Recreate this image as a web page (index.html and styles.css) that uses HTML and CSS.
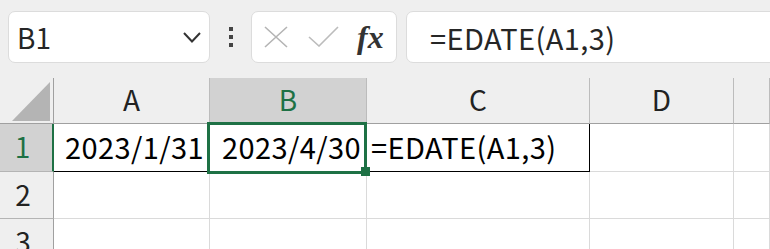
FILE: index.html
```html
<!DOCTYPE html>
<html lang="ja">
<head>
    <meta charset="UTF-8">
    <title>EDATE</title>
    <link rel="stylesheet" href="styles.css">
</head>
<body>
<div class="toolbar">
    <div class="namebox">
        <span class="ref">B1</span>
        <svg class="chevron" width="18" height="11" viewBox="0 0 18 11"><path d="M1 1 L9 9.5 L17 1" fill="none" stroke="#333" stroke-width="2"/></svg>
    </div>
    <div class="grip"><span></span><span></span><span></span></div>
    <div class="fxbox">
        <svg class="cancel" width="24" height="22" viewBox="0 0 24 22"><path d="M1 1 L23 21 M23 1 L1 21" fill="none" stroke="#b4b4b4" stroke-width="1.6"/></svg>
        <svg class="enter" width="31" height="21" viewBox="0 0 31 21"><path d="M1 11 L11 20 L30 1" fill="none" stroke="#bcbcbc" stroke-width="1.6"/></svg>
        <span class="fx">fx</span>
    </div>
    <div class="formula">=EDATE(A1,3)</div>
</div>

<div class="sheet">
    <div class="corner">
        <svg width="53" height="45" viewBox="0 0 53 45"><polygon points="12,43 50,43 50,4" fill="#b4b4b4"/></svg>
    </div>
    <div class="colhead">A</div>
    <div class="colhead sel">B</div>
    <div class="colhead">C</div>
    <div class="colhead">D</div>
    <div class="colhead"></div>

    <div class="rowhead sel">1</div>
    <div class="cell num boxed">2023/1/31</div>
    <div class="cell num boxed active">2023/4/30</div>
    <div class="cell boxed last">=EDATE(A1,3)</div>
    <div class="cell"></div>
    <div class="cell"></div>

    <div class="rowhead">2</div>
    <div class="cell"></div>
    <div class="cell"></div>
    <div class="cell"></div>
    <div class="cell"></div>
    <div class="cell"></div>

    <div class="rowhead">3</div>
    <div class="cell"></div>
    <div class="cell"></div>
    <div class="cell"></div>
    <div class="cell"></div>
    <div class="cell"></div>
</div>
</body>
</html>
```

FILE: styles.css
```css
body {
    margin: 0;
    overflow: hidden;
    background: #fff;
    font-family: "Noto Sans CJK JP", "Noto Sans", sans-serif;
    color: #000;
}

/* formula bar */
.toolbar {
    display: flex;
    align-items: center;
    height: 78px;
    padding: 0 0 4px 8px;
    box-sizing: border-box;
    background: #efefef;
}
.namebox, .fxbox, .formula {
    height: 52px;
    box-sizing: border-box;
    background: #fff;
    border: 1px solid #dcdcdc;
    border-radius: 7px;
    display: flex;
    align-items: center;
}
.namebox {
    width: 202px;
    padding: 0 8px 0 8px;
    justify-content: space-between;
}
.ref {
    font-size: 28px;
    color: #262626;
}
.grip {
    margin-left: 19px;
    display: flex;
    flex-direction: column;
    gap: 4px;
}
.grip span {
    width: 4px;
    height: 4px;
    background: #444;
}
.fxbox {
    width: 146px;
    margin-left: 18px;
    padding-left: 12px;
}
.enter {
    margin-left: 20px;
    margin-top: -2px;
}
.fx {
    margin-left: 18px;
    font-family: "Liberation Serif", serif;
    font-style: italic;
    font-weight: bold;
    font-size: 32px;
    color: #333;
}
.formula {
    flex: 1;
    margin-left: 9px;
    margin-right: -10px;
    padding-left: 23px;
    font-size: 29px;
    letter-spacing: 0.4px;
    color: #262626;
}

/* grid */
.sheet {
    display: grid;
    grid-template-columns: 54px 156px 157px 223px 144px 1fr;
    grid-template-rows: 46px 48px 47px 47px;
    background: #efefef;
}
.sheet > div {
    box-sizing: border-box;
}
.corner {
    border-right: 1px solid #a0a0a0;
    border-bottom: 1px solid #a0a0a0;
}
.corner svg {
    display: block;
}
.colhead {
    font-size: 28px;
    color: #222;
    text-align: center;
    line-height: 42px;
    border-bottom: 1px solid #a0a0a0;
    border-right: 1px solid #bcbcbc;
}
.rowhead {
    font-size: 28px;
    color: #222;
    text-align: center;
    padding-right: 7px;
    line-height: 44px;
    border-right: 1px solid #a0a0a0;
    border-bottom: 1px solid #b4b4b4;
}
.sel {
    background: #d2d2d2;
    color: #1e7145;
}
.rowhead.sel {
    border-right: 2px solid #1e7145;
}
.cell {
    background: #fff;
    border-right: 1px solid #dadada;
    border-bottom: 1px solid #dadada;
    font-size: 29px;
    letter-spacing: 0.4px;
    line-height: 44px;
    padding: 0 5px 0 4px;
    white-space: nowrap;
}
.num {
    text-align: right;
}
.boxed {
    border-bottom-color: #000;
}
.last {
    border-right-color: #000;
}
.active {
    position: relative;
}
.active::before {
    content: "";
    position: absolute;
    left: -3px;
    right: -1px;
    top: -2px;
    bottom: -3px;
    border: 3px solid #1e7145;
}
.active::after {
    content: "";
    position: absolute;
    right: -4px;
    bottom: -5px;
    width: 9px;
    height: 9px;
    background: #1e7145;
}
```
